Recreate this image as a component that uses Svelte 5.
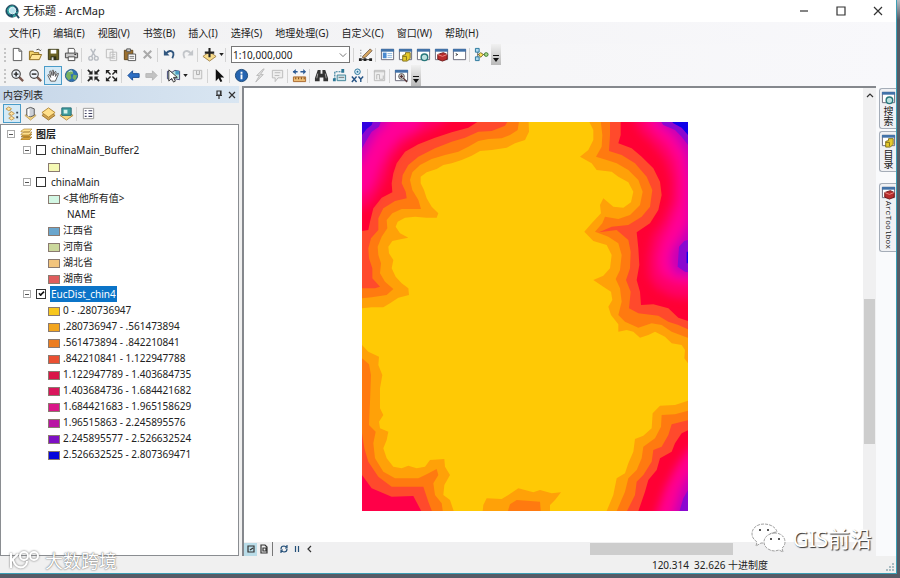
<script>
    const menus = ['文件(F)', '编辑(E)', '视图(V)', '书签(B)', '插入(I)', '选择(S)', '地理处理(G)', '自定义(C)', '窗口(W)', '帮助(H)'];

    // 16x16 icon bodies
    const win = '<path d="M1.500 2.500h13v11h-13z" fill="#fff" stroke="#667"/><path d="M1 2h14v3H1z" fill="#4272a8"/>';
    const glass = '<path d="M9.500 9.500l4.500 4.500" stroke="#7a5a50" stroke-width="2.500"/><circle cx="6.500" cy="6.500" r="4.500" fill="#eef4fb" stroke="#444" stroke-width="1.200"/>';
    const icons = {
        new: '<path d="M3.500 1.500h6l3 3v10h-9z" fill="#fff" stroke="#555"/><path d="M9.500 1.500v3h3" fill="none" stroke="#555"/>',
        open: '<path d="M1.500 13.500v-9h4l1 1.500h5v3" fill="#f3d36b" stroke="#8c6a1c"/><path d="M1.500 13.500l2.500-5.500h10.500l-2.500 5.500z" fill="#ffe597" stroke="#8c6a1c"/><path d="M9 3q3-2 4 1l1-1" fill="none" stroke="#444"/>',
        save: '<path d="M2.500 2.500h11v11h-11z" fill="#6c6326" stroke="#393818"/><path d="M5 3h6v4H5z" fill="#fff"/><path d="M5 10h6v4H5z" fill="#2f3018"/><path d="M6 11h2v3H6z" fill="#ddd"/>',
        print: '<path d="M4.500 6.500v-5h6l1 2v3" fill="#fff" stroke="#555"/><path d="M1.500 6.500h13v5h-13z" fill="#c8c8c8" stroke="#444"/><path d="M4.500 10.500h7v4h-7z" fill="#fff" stroke="#444"/><path d="M11 8h2" stroke="#333"/>',
        cut: '<path d="M5 2l5 8M10 2L6 10" stroke="#b8bcc2" stroke-width="1.500"/><circle cx="5" cy="12" r="2" fill="none" stroke="#b8bcc2" stroke-width="1.500"/><circle cx="11" cy="12" r="2" fill="none" stroke="#b8bcc2" stroke-width="1.500"/>',
        copy: '<path d="M2.500 2.500h7v9h-7zM6.500 5.500h7v9h-7z" fill="#f3f3f3" stroke="#bbb"/><path d="M8 8h4M8 10h4M8 12h4" stroke="#c4c4c4"/>',
        paste: '<path d="M2.500 3.500h9v10h-9z" fill="#9b6f2e" stroke="#604417"/><path d="M5 2h4v3H5z" fill="#ccc" stroke="#555"/><path d="M6.500 7.500h8v7h-8z" fill="#fff" stroke="#555"/><path d="M8 10h5M8 12h5" stroke="#777"/>',
        del: '<path d="M4 4l8 8M12 4l-8 8" stroke="#aaa" stroke-width="2.200"/>',
        undo: '<path d="M4 7q5-5 8-1 1 3-1 6" fill="none" stroke="#31577f" stroke-width="2"/><path d="M2 3v6h6z" fill="#31577f"/>',
        redo: '<path d="M12 7Q7 2 4 6q-1 3 1 6" fill="none" stroke="#c3c6ca" stroke-width="2"/><path d="M14 3v6H8z" fill="#c3c6ca"/>',
        add: '<path d="M1 10l7-5 7 5-7 5z" fill="#f8dc8b" stroke="#a08048"/><path d="M8 1v10M3 6h10" stroke="#222" stroke-width="2.200"/>',
        editor: '<path d="M3 3v11" stroke="#555" stroke-dasharray="1 2"/><path d="M1 12h3v3H1zM6 12h3v3H6zM12 12h3v3h-3z" fill="#222"/><path d="M4 13.500h9" stroke="#222"/><path d="M5 10l8-8 2 2-7 7-3 1z" fill="#d8a760" stroke="#5d4630" stroke-width=".8"/>',
        table: win + '<path d="M3 6h4v6H3z" fill="#4b8ad0"/><path d="M8 7h5M8 9h5M8 11h5" stroke="#8db5df"/>',
        catalog: win + '<path d="M5 9l3-1V6h5v6l-3 3H5z" fill="#e5ca2c" stroke="#81701c"/><path d="M5 10h4v4" stroke="#81701c" fill="none"/>',
        search: win + '<circle cx="9" cy="11" r="3.500" fill="#bde0df" stroke="#28777b" stroke-width="1.500"/>',
        toolbox: win + '<path d="M4 8l6-2 4 2v5l-5 2-5-2z" fill="#b82c2c" stroke="#701919"/><path d="M4 8l5 2 5-2" fill="none" stroke="#eb8b83"/>',
        python: win + '<path d="M4 7l2 1-2 1" fill="none" stroke="#222"/>',
        model: '<path d="M4 3v10M4 8h8" stroke="#555"/><path d="M1.500 1.500h4v4h-4zM1.500 10.500h4v4h-4z" fill="#acd7ee" stroke="#28759a"/><path d="M7 6l3 2-3 3-2-3z" fill="#ffe45c" stroke="#786b22"/><circle cx="13" cy="8" r="2" fill="#a5d888" stroke="#3d7930"/>',
        zoomin: glass + '<path d="M4 6.500h5M6.500 4v5" stroke="#222" stroke-width="1.500"/>',
        zoomout: glass + '<path d="M4 6.500h5" stroke="#222" stroke-width="1.500"/>',
        pan: '<path d="M5 14l-3-6q0-2 2 0l1 2-1-6q0-2 1.500 0l1 4V3q1-2 1.500 0v5l1.500-4q1-1 1.200.500L10 9l2-3q2-1 1 1l-3 7z" fill="#fff" stroke="#555"/>',
        globe: '<circle cx="8" cy="8" r="6.500" fill="#2f70b5" stroke="#285b86"/><path d="M3 5q3-4 6-2l1 3-3 1 1 4-3 2-3-4zM10 7l4 1-2 5-3-2z" fill="#78b25f"/><path d="M5 4q3-2 4 0" stroke="#cce8ff" fill="none"/>',
        fixin: '<path d="M2 2l4 4M14 2l-4 4M2 14l4-4M14 14l-4-4" stroke="#222" stroke-width="1.800"/><path d="M7 2.500V7H2.500zM9 2.500V7h4.500zM7 13.500V9H2.500zM9 13.500V9h4.500z" fill="#222"/>',
        fixout: '<path d="M3 3l4 4M13 3L9 7M3 13l4-4M13 13L9 9" stroke="#222" stroke-width="1.500"/><path d="M2 6.500V2h4.500zM14 6.500V2H9.500zM2 9.500V14h4.500zM14 9.500V14H9.500z" fill="#222"/>',
        back: '<path d="M2 8l5-5v3h7v4H7v3z" fill="#2d6fc5" stroke="#174b91"/>',
        forward: '<path d="M14 8L9 3v3H2v4h7v3z" fill="#c3c3c3" stroke="#b5b5b5"/>',
        select: '<path d="M1.500 3.500l5 1 3-2 5 1v9l-5-1-4 1-4-1z" fill="#b9e3df" stroke="#447"/><path d="M3 2v12l3-3 2 4 2-1-2-4h4z" fill="#fff" stroke="#333"/><path d="M10 3h4v4h-4z" fill="#4a9ec4"/>',
        clear: '<path d="M3.500 2.500h9v9h-9z" fill="#eee" stroke="#bbb"/><path d="M7 3v4h3V3" fill="none" stroke="#aaa"/>',
        pointer: '<path d="M4 1v13l3-3 2 4 2-1-2-4h4z" fill="#111"/>',
        info: '<circle cx="8" cy="8" r="6.500" fill="#2564b0" stroke="#174678"/><path d="M8 7v5M8 4v2" stroke="#fff" stroke-width="2"/>',
        bolt: '<path d="M12 1L5 8h3l-4 7 8-8H9l4-6z" fill="#ddd" stroke="#bbb"/>',
        popup: '<path d="M2.500 2.500h11v8h-5l-3 4v-4h-3z" fill="#eee" stroke="#bbb"/><path d="M5 5h6M5 8h5" stroke="#bbb"/>',
        measure: '<path d="M1 4h14" stroke="#2c5b95" stroke-dasharray="5 3" stroke-width="1.500"/><path d="M4 1L1 4l3 3zM12 1l3 3-3 3z" fill="#2c5b95"/><path d="M1.500 9.500h13v5h-13z" fill="#edbd76" stroke="#a9662c"/><path d="M4 10v2M7 10v2M10 10v2M13 10v2" stroke="#744315"/>',
        find: '<path d="M4 2h3v4h2V2h3l3 9v3h-5v-4H6v4H1v-3z" fill="#333"/><path d="M4 6l-1 5M12 6l1 5" stroke="#aaa"/>',
        route: '<path d="M3 12V4h8" fill="none" stroke="#2c7896" stroke-dasharray="2 1" stroke-width="1.200"/><path d="M1 11h3v3H1zM10 1h3v4h-3z" fill="#2c7896"/><path d="M5.500 7.500h9v6h-9z" fill="#cfe6ec" stroke="#3d8295"/><path d="M7 10h6" stroke="#777"/>',
        xy: '<circle cx="8" cy="4" r="3" fill="#d8edf9" stroke="#287297"/><circle cx="8" cy="4" r="1" fill="#287297"/><path d="M2 9l5 6M7 9l-5 6M9 9l2.500 3L14 9M11.500 12v3" fill="none" stroke="#265485" stroke-width="1.500"/>',
        time: '<path d="M2.500 2.500h11v11h-11z" fill="#eee" stroke="#bbb"/><path d="M2 4h12M5 12V7h3v5h4V8" fill="none" stroke="#bbb"/>',
        viewer: win + '<circle cx="8" cy="9" r="3" fill="#fff" stroke="#444"/><path d="M6 9h4M8 7v4M10 11l4 4" stroke="#583535" stroke-width="1.500"/>',
        order: '<path d="M3 3l4 3-3 3 4 3" fill="none" stroke="#b49b65"/><path d="M1 3l3-2 3 2-3 2zM4 8l3-2 3 2-3 2zM4 13l3-2 3 2-3 2z" fill="#ffe4a0" stroke="#c29852"/><path d="M13 6v2M13 11v2" stroke="#345" stroke-width="2"/>',
        source: '<path d="M2 10l6-3 6 3-6 5z" fill="#f4d37d" stroke="#c2a263"/><path d="M4 3q4-3 8 0v7q-4 3-8 0z" fill="#ccd0d6" stroke="#555"/><path d="M6 3v8" stroke="#fff" stroke-width="2"/>',
        visible: '<path d="M1 10l7-5 7 5-7 5z" fill="#d1a451" stroke="#9b7630"/><path d="M1 7l7-5 7 5-7 5z" fill="#ffe08a" stroke="#b18534"/>',
        selection: '<path d="M1 10l7-4 7 4-7 5z" fill="#f8d780" stroke="#b38b42"/><path d="M3 2h10v8H3z" fill="#41a0a0" stroke="#256b75"/><path d="M5 4h4v4H5z" fill="#d6f2ec"/>',
        options: '<path d="M2.500 2.500h11v11h-11z" fill="#fff" stroke="#999"/><path d="M4 5h2M4 8h2M4 11h2M8 5h4M8 8h4M8 11h4" stroke="#446" stroke-width="1.200"/>'
    };

    // '|' is a separator, 'v' a drop-down arrow
    const standard = ['new', 'open', 'save', 'print', '|', 'cut', 'copy', 'paste', 'del', '|', 'undo', 'redo', '|', 'add', 'v', '|'];
    const windows = ['|', 'editor', '|', 'table', 'catalog', 'search', 'toolbox', 'python', '|', 'model'];
    const tools = ['zoomin', 'zoomout', 'pan', 'globe', '|', 'fixin', 'fixout', '|', 'back', 'forward', '|', 'select', 'v', 'clear', '|', 'pointer', '|', 'info', 'bolt', 'popup', '|', 'measure', '|', 'find', 'route', 'xy', '|', 'time', '|', 'viewer'];
    const contents = ['order', 'source', 'visible', 'selection', '|', 'options'];

    let layers = $state([
        { name: 'chinaMain_Buffer2', checked: false, classes: [{ color: '#f5f9b4', label: '' }] },
        {
            name: 'chinaMain',
            checked: false,
            classes: [
                { color: '#d3f7e4', label: '<其他所有值>' },
                { label: 'NAME' },
                { color: '#6aa6cd', label: '江西省' },
                { color: '#cbd89c', label: '河南省' },
                { color: '#f2c47d', label: '湖北省' },
                { color: '#df5d5d', label: '湖南省' }
            ]
        },
        {
            name: 'EucDist_chin4',
            checked: true,
            selected: true,
            classes: [
                { color: '#f7c71e', label: '0 - .280736947' },
                { color: '#f2a51e', label: '.280736947 - .561473894' },
                { color: '#ec7d20', label: '.561473894 - .842210841' },
                { color: '#ea5032', label: '.842210841 - 1.122947788' },
                { color: '#d91648', label: '1.122947789 - 1.403684735' },
                { color: '#d9165c', label: '1.403684736 - 1.684421682' },
                { color: '#d91688', label: '1.684421683 - 1.965158629' },
                { color: '#b916a4', label: '1.96515863 - 2.245895576' },
                { color: '#7e10c4', label: '2.245895577 - 2.526632524' },
                { color: '#0505dc', label: '2.526632525 - 2.807369471' }
            ]
        }
    ]);

    const docks = [
        { icon: 'search', label: '搜索' },
        { icon: 'catalog', label: '目录' },
        { icon: 'toolbox', label: 'ArcToolbox', apart: true }
    ];
</script>

{#snippet icon(name)}
    <svg class="icon" viewBox="0 0 16 16" fill="none" aria-hidden="true">{@html icons[name]}</svg>
{/snippet}

{#snippet bar(items)}
    {#each items as item}
        {#if item == '|'}
            <span class="sep"></span>
        {:else if item == 'v'}
            <button class="drop" aria-label="more"><svg viewBox="0 0 6 4"><path d="M0 0h6L3 4z" fill="#222" /></svg></button>
        {:else}
            <button class="tool" class:active={item == 'pan' || item == 'order'} aria-label={item}>{@render icon(item)}</button>
        {/if}
    {/each}
{/snippet}

{#snippet overflow()}
    <button class="overflow" aria-label="toolbar options"><svg viewBox="0 0 6 7"><path d="M0 0h6v1H0zM0 3h6L3 7z" fill="#111" /></svg></button>
{/snippet}

<div class="desktop">
    <div class="window">
        <header class="title">
            <svg class="logo" viewBox="0 0 16 16" fill="none">
                <circle cx="7.500" cy="7.500" r="6.500" fill="#1b526f" stroke="#153b50" />
                <path d="M2 6q4-6 8-4L8 6 5 8l1 4-3-2zM10 9l4-1-2 5-4 1z" fill="#37a5a0" />
                <circle cx="8" cy="7" r="3.500" fill="#b9e3ee" stroke="#e8f5fa" />
                <path d="M11 10l4 5" stroke="#224d66" stroke-width="2" />
            </svg>
            <h1>无标题 - ArcMap</h1>
            <div class="caption">
                <button aria-label="minimize"><svg viewBox="0 0 10 10"><path d="M1 5h8" /></svg></button>
                <button aria-label="maximize"><svg viewBox="0 0 10 10"><path d="M1 1h8v8H1z" /></svg></button>
                <button aria-label="close"><svg viewBox="0 0 10 10"><path d="M1 1l8 8M9 1L1 9" /></svg></button>
            </div>
        </header>

        <nav class="menus">
            {#each menus as menu}
                <button>{menu}</button>
            {/each}
        </nav>

        <div class="toolbar">
            <span class="grip"></span>
            {@render bar(standard)}
            <div class="scale">
                <select aria-label="map scale">
                    <option>1:10,000,000</option>
                </select>
                <svg viewBox="0 0 10 6"><path d="M1 1l4 4 4-4" /></svg>
            </div>
            {@render bar(windows)}
            {@render overflow()}
        </div>
        <div class="toolbar">
            <span class="grip"></span>
            {@render bar(tools)}
            {@render overflow()}
        </div>

        <main>
            <aside class="toc">
                <div class="toc-title">
                    <h2>内容列表</h2>
                    <button aria-label="pin"><svg viewBox="0 0 10 10"><path d="M3 1h4v4H3zM2 5.500h6M5 6v3M6.500 1v4" /></svg></button>
                    <button aria-label="close panel"><svg viewBox="0 0 10 10"><path d="M2 2l6 6M8 2L2 8" /></svg></button>
                </div>
                <div class="toc-tools">{@render bar(contents)}</div>
                <div class="tree">
                    <div class="row root">
                        <span class="expander"></span>
                        <svg class="stack" viewBox="0 0 12 12">
                            <path d="M1 9l3-3h8L9 9z M1 11l3-2h8l-3 3H1z" fill="#d9a43c" stroke="#936b24" stroke-width=".6" />
                            <path d="M1 6l3-2h8L9 7H1zM1 3l3-2h8L9 4H1z" fill="#ffe08c" stroke="#a37b31" stroke-width=".6" />
                        </svg>
                        <strong>图层</strong>
                    </div>
                    {#each layers as layer}
                        <label class="row layer">
                            <span class="expander"></span>
                            <input type="checkbox" bind:checked={layer.checked} />
                            <span class="name" class:selected={layer.selected}>{layer.name}</span>
                        </label>
                        {#each layer.classes as item}
                            <div class="row class" class:heading={!item.color}>
                                {#if item.color}
                                    <span class="swatch" style="background: {item.color}"></span>
                                {/if}
                                {item.label}
                            </div>
                        {/each}
                    {/each}
                </div>
            </aside>

            <section class="view">
                <div class="canvas">
                    <svg class="raster" viewBox="0 0 978 1167">
                        <defs>
                            <filter id="soft" x="-20%" y="-20%" width="140%" height="140%"><feGaussianBlur stdDeviation="15" /></filter>
                        </defs>
                        <path d="M0 0h978v1167H0z" fill="#ffc905" />
                        <!-- north west -->
                        <g transform="translate(-21 -21)">
                            <path fill="#ffa108" d="M0 0L520 0 522 50 510 75 480 85 455 98 410 105 375 108 350 122 320 135 290 145 265 150 245 162 215 172 197 185 197 205 207 225 215 250 230 275 250 295 245 308 215 308 180 305 150 308 128 320 122 335 135 355 160 368 140 372 112 378 100 395 102 415 115 435 110 460 122 485 140 505 160 520 162 540 130 548 105 565 85 577 50 577 0 582z" />
                            <path fill="#ff7a10" d="M0 0L495 0 488 45 465 60 440 70 400 72 370 78 340 95 310 110 270 120 230 132 195 150 172 172 165 195 172 225 190 255 198 282 140 282 112 295 95 315 97 340 80 365 68 395 70 420 78 445 75 475 90 500 115 522 95 540 50 547 0 552z" />
                            <path fill="#ff4a2c" d="M0 0L470 0 450 32 410 48 370 50 330 68 290 80 240 100 190 125 160 150 143 180 140 205 152 230 155 250 120 258 85 280 70 310 70 345 48 370 40 400 42 430 52 460 52 490 75 515 60 520 0 520z" />
                            <path fill="#ff0034" d="M0 0L400 0 340 38 290 52 240 68 190 88 150 110 125 145 115 175 110 205 112 232 80 248 55 280 45 320 40 345 0 352z" />
                            <g filter="url(#soft)">
                                <path fill="#ff0068" d="M-60 -60L320 -60 265 28 195 60 140 95 108 140 88 200 65 240 42 275 -60 300z" />
                                <path fill="#ff0098" d="M-60 -60L240 -60 190 35 135 65 95 110 70 160 48 215 30 235 -60 245z" />
                                <path fill="#c400b8" d="M-60 -60L140 -60 95 25 65 55 40 100 15 150 -60 160z" />
                            </g>
                            <path fill="#8a08d0" d="M0 0L85 0 72 35 50 50 35 75 21 100 0 105z" />
                            <path fill="#3000e0" d="M0 0L60 0 50 30 35 42 21 60 0 65z" />
                        </g>
                        <!-- east -->
                        <g transform="translate(489 -21)">
                            <path fill="#ffa108" d="M510 0L183 0 205 45 205 75 190 105 165 125 200 145 215 165 260 170 280 185 310 202 325 230 318 262 295 278 265 275 235 250 225 270 228 295 200 325 178 350 205 378 245 390 260 420 255 460 235 482 205 495 235 515 258 530 262 555 250 575 258 600 280 628 280 650 305 645 325 650 345 668 370 660 390 650 420 665 440 685 470 690 480 705 478 730 489 745 510 750z" />
                            <path fill="#ff7a10" d="M510 0L225 0 232 60 230 95 213 125 245 135 275 145 310 165 340 195 353 230 345 270 315 300 280 312 240 305 232 325 210 350 250 365 280 385 290 420 285 465 272 492 285 520 290 560 285 580 280 600 300 620 340 638 380 625 410 630 440 650 480 665 510 675z" />
                            <path fill="#ff4a2c" d="M510 0L255 0 255 60 252 108 290 120 330 145 365 185 382 225 375 275 350 305 310 330 260 335 222 352 275 345 310 375 317 410 315 460 303 495 317 530 312 580 340 595 400 602 430 620 460 630 510 652z" />
                            <path fill="#ff0034" d="M510 0L287 0 287 60 280 85 320 100 350 125 385 160 405 200 410 240 400 285 375 325 335 352 340 400 343 450 335 495 345 530 348 570 385 568 430 580 460 608 510 625z" />
                            <g filter="url(#soft)">
                                <path fill="#ff0068" d="M550 -60L290 -60 345 50 385 90 420 135 438 190 438 255 415 315 382 365 370 430 372 485 395 520 440 545 550 560z" />
                                <path fill="#ff0098" d="M550 -60L320 -60 385 45 430 90 458 140 466 200 464 260 440 325 415 375 400 430 408 475 445 498 550 515z" />
                                <path fill="#c400b8" d="M550 -60L370 -60 400 25 445 60 482 115 495 200 492 320 465 370 443 400 435 440 450 478 550 490z" />
                            </g>
                            <path fill="#8a08d0" d="M510 0L395 0 415 30 450 45 470 65 489 90 510 92zM510 370L478 378 462 395 458 455 480 470 510 475z" />
                            <path fill="#1000e8" d="M510 0L425 0 445 25 470 38 489 60 510 65zM510 410L485 410 485 445 510 445z" />
                        </g>
                        <!-- south west -->
                        <g transform="translate(-21 579)">
                            <path fill="#ffa108" d="M0 80L21 90 40 110 72 125 70 150 82 180 75 220 75 280 85 300 72 320 75 340 100 350 95 375 85 400 95 430 115 455 140 460 160 452 185 460 210 455 225 435 268 432 270 455 285 480 268 510 265 540 285 555 300 600 0 600z" />
                            <path fill="#ff7a10" d="M0 120L21 130 42 148 48 180 45 260 42 330 62 350 55 385 60 430 85 470 120 490 190 490 215 478 245 462 250 480 235 505 240 540 260 565 265 600 0 600z" />
                            <path fill="#ff4a2c" d="M0 350L21 355 28 400 40 440 70 485 110 515 205 515 220 560 235 600 0 600z" />
                            <path fill="#ff0048" d="M0 460L21 480 50 520 110 545 175 543 205 600 0 600z" />
                            <path fill="#ffa108" d="M382 600L385 570 395 550 440 552 460 540 490 520 535 532 555 525 590 535 618 532 600 555 585 570 585 600z" />
                            <path fill="#ff7a10" d="M455 600L465 568 485 555 555 560 558 600z" />
                        </g>
                        <!-- south east -->
                        <g transform="translate(489 579)">
                            <path fill="#ffa108" d="M510 250L450 270 405 272 383 295 380 340 355 362 330 372 325 410 310 445 300 475 275 490 265 540 240 600 510 600z" />
                            <path fill="#ff7a10" d="M510 282L450 298 410 300 408 335 390 370 355 395 350 430 335 465 310 490 300 530 270 600 510 600z" />
                            <path fill="#ff4a2c" d="M510 310L440 328 430 360 410 395 385 405 380 440 355 480 335 500 330 540 300 600 510 600z" />
                            <path fill="#ff0034" d="M510 335L470 355 450 385 440 410 405 430 395 465 370 495 360 530 336 600 510 600z" />
                            <g filter="url(#soft)">
                                <path fill="#ff0090" d="M560 340L480 415 450 460 420 520 375 650 560 650z" />
                                <path fill="#c400b8" d="M560 400L485 490 468 520 428 650 560 650z" />
                            </g>
                            <path fill="#8a08d0" d="M510 510L489 525 475 550 460 600 510 600z" />
                        </g>
                    </svg>
                </div>
                <div class="vscroll">
                    <svg viewBox="0 0 10 10"><path d="M2 7l3-3 3 3" /></svg>
                    <span class="vthumb"></span>
                </div>
                <div class="hscroll">
                    <button class="mini active" aria-label="data view"><svg viewBox="0 0 10 10"><path d="M2 2h6v6H2zM4 6l3-2" /></svg></button>
                    <button class="mini" aria-label="layout view"><svg viewBox="0 0 10 10"><path d="M2 1h4l2 2v6H2zM4 4h3v3H4z" /></svg></button>
                    <span class="sep"></span>
                    <button class="mini refresh" aria-label="refresh"><svg viewBox="0 0 10 10"><path d="M2 5q0-3 3-3l3 1M8 1v3H6M8 5q0 3-3 3L2 7M2 9V6h2" /></svg></button>
                    <button class="mini pause" aria-label="pause"><svg viewBox="0 0 10 10"><path d="M3.500 2v6M6.500 2v6" /></svg></button>
                    <button class="mini" aria-label="scroll left"><svg viewBox="0 0 10 10"><path d="M6 2L3 5l3 3" /></svg></button>
                    <div class="track"><span class="hthumb"></span></div>
                </div>
            </section>

            <aside class="docks">
                {#each docks as dock}
                    <button class="dock" class:apart={dock.apart}>{@render icon(dock.icon)}<span>{dock.label}</span></button>
                {/each}
            </aside>
        </main>

        <footer>
            <span>120.314&nbsp; 32.626 十进制度</span>
            <svg class="resize" viewBox="0 0 9 9"><path d="M7 1h2v2H7zM4 4h2v2H4zM7 4h2v2H7zM1 7h2v2H1zM4 7h2v2H4zM7 7h2v2H7z" fill="#a9bcc2" /></svg>
        </footer>
    </div>

    <div class="mark left">
        <svg viewBox="0 0 34 22"><path d="M3 3v15M3 11l7-7M5 10q3 9 10 7 4-2 4-6M12 6a4 4 0 1 0 8 0 4 4 0 1 0-8 0M22 6a4 4 0 1 0 8 0 4 4 0 1 0-8 0" /></svg>
        <span>大数跨境</span>
    </div>
    <div class="mark right">
        <svg viewBox="0 0 36 32">
            <path d="M14 2C7 2 2 6 2 12c0 3 2 6 5 8l-1 4 5-3h5c-1-7 5-11 11-11C26 5 20 2 14 2z" />
            <path d="M25 11c-6 0-11 4-11 9s5 9 11 9l4-1 4 2-1-4c2-1 3-4 3-6 0-5-4-9-10-9z" />
            <path class="eyes" d="M9 8h2M17 8h2M20 17h2M28 17h2" />
        </svg>
        <span>GIS前沿</span>
    </div>
</div>

<style>
    :global(body) {
        margin: 0;
        background: #70757d;
    }

    .desktop {
        position: relative;
        display: flex;
        box-sizing: border-box;
        min-height: 100vh;
        padding: 0 3px 4px 0;
        background: linear-gradient(#b9bdc3, #555b66 20px);
        color: #222;
        font-family: 'Noto Sans', 'Noto Sans CJK SC', sans-serif;
        font-size: 10px;
        line-height: 16px;
    }

    .window {
        display: flex;
        flex: 1;
        flex-direction: column;
        min-width: 0;
        border-right: 1px solid #3b9fb5;
        border-bottom: 1px solid #3b9fb5;
        background: #f0f0f0;
    }

    button {
        display: flex;
        align-items: center;
        justify-content: center;
        padding: 0;
        border: 0;
        background: none;
        color: inherit;
        font: inherit;
    }

    h1,
    h2 {
        margin: 0;
        font-weight: 400;
    }

    .title {
        display: flex;
        align-items: center;
        height: 22px;
        padding-left: 5px;
        background: #fff;
    }

    .logo {
        width: 15px;
        height: 15px;
        margin-right: 3px;
    }

    h1 {
        flex: 1;
        font-size: 11px;
    }

    .caption {
        display: flex;
    }

    .caption button {
        width: 37px;
        height: 20px;
    }

    .caption svg,
    .toc-title svg,
    .mini svg,
    .vscroll svg {
        width: 10px;
        height: 10px;
        fill: none;
        stroke: #333;
        stroke-width: 1.2;
    }

    .menus {
        display: flex;
        gap: 13px;
        height: 22px;
        padding-left: 9px;
        background: linear-gradient(90deg, #f1f1f2, #f8f8fb);
    }

    .toolbar {
        display: flex;
        align-items: center;
        height: 21px;
        background: linear-gradient(90deg, #f3f3f3, #f8f8fb);
    }

    .grip {
        width: 2px;
        height: 14px;
        margin: 0 2px 0 4px;
        border-left: 2px dotted #c4c4c4;
        box-sizing: border-box;
    }

    .tool {
        flex: none;
        box-sizing: border-box;
        width: 18px;
        height: 19px;
    }

    .tool.active {
        border: 1px solid #4a9cc9;
        background: #d5eaf6;
    }

    .icon {
        flex: none;
        width: 15px;
        height: 15px;
    }

    .drop {
        width: 6px;
        height: 18px;
    }

    .drop svg {
        width: 5px;
        height: 3px;
    }

    .sep {
        flex: none;
        width: 1px;
        height: 14px;
        margin: 0 2px 0 1px;
        background: #d4d4d4;
    }

    .overflow {
        align-items: flex-end;
        align-self: stretch;
        width: 10px;
        margin-left: 1px;
        padding-bottom: 3px;
        background: linear-gradient(#f1f1f1, #b9b9b9);
    }

    .overflow svg {
        width: 6px;
        height: 7px;
    }

    .scale {
        position: relative;
        width: 119px;
        margin: 0 2px 0 3px;
    }

    .scale svg {
        position: absolute;
        top: 6px;
        right: 3px;
        width: 8px;
        height: 6px;
        fill: none;
        stroke: #555;
        pointer-events: none;
    }

    select {
        display: block;
        appearance: none;
        box-sizing: border-box;
        width: 100%;
        height: 17px;
        padding: 0 1px;
        border: 1px solid #777;
        border-radius: 0;
        background: #fff;
        color: #222;
        font: inherit;
        line-height: 14px;
    }

    main {
        display: flex;
        flex: 1;
    }

    .toc {
        display: flex;
        flex-direction: column;
        width: 239px;
    }

    .toc-title {
        display: flex;
        align-items: center;
        height: 17px;
        padding: 0 1px 0 3px;
        background: linear-gradient(90deg, #c6d6e8, #d9e6f2);
    }

    h2 {
        flex: 1;
        font-size: 10px;
    }

    .toc-title button {
        width: 13px;
    }

    .toc-tools {
        display: flex;
        align-items: center;
        height: 21px;
        padding-left: 3px;
    }

    .tree {
        flex: 1;
        padding-top: 1px;
        border: 1px solid #8a8d91;
        background: #fff;
    }

    .row {
        display: flex;
        align-items: center;
        height: 16px;
        white-space: nowrap;
    }

    .root {
        padding-left: 6px;
    }

    .layer {
        padding-left: 22px;
    }

    .class {
        padding-left: 47px;
    }

    .heading {
        padding-left: 66px;
    }

    .expander {
        box-sizing: border-box;
        width: 8px;
        height: 8px;
        border: 1px solid #aaa;
        background: linear-gradient(#555, #555) center / 4px 1px no-repeat;
    }

    .stack {
        width: 12px;
        height: 12px;
        margin: 0 4px 0 5px;
    }

    input {
        appearance: none;
        box-sizing: border-box;
        width: 10px;
        height: 10px;
        margin: 0 4px 0 5px;
        border: 1px solid #333;
        background: #fff;
    }

    input:checked::before {
        display: block;
        width: 5px;
        height: 2px;
        margin: 1px 0 0 1px;
        border: solid #111;
        border-width: 0 0 2px 2px;
        box-sizing: content-box;
        content: '';
        transform: rotate(-45deg) scale(0.8);
    }

    .name {
        padding: 0 1px;
        line-height: 16px;
    }

    .selected {
        background: #0b74c8;
        color: #fff;
    }

    .swatch {
        box-sizing: border-box;
        width: 12px;
        height: 9px;
        margin: 2px 3px 0 0;
        border: 1px solid #8a7a70;
    }

    .view {
        display: grid;
        flex: 1;
        grid-template: 1fr 14px / 1fr 13px;
        min-width: 0;
        margin-left: 3px;
        border-top: 2px solid #85888d;
        border-left: 2px solid #85888d;
        background: #fff;
    }

    .canvas {
        padding: 34px 0 0 118px;
    }

    .raster {
        display: block;
        width: 326px;
    }

    .vscroll {
        display: flex;
        flex-direction: column;
        align-items: center;
        padding-top: 2px;
        background: #f0f0f1;
    }

    .vthumb {
        width: 11px;
        height: 32%;
        margin-top: 199px;
        background: #cdcdcd;
    }

    .hscroll {
        display: flex;
        grid-column: 1 / 3;
        align-items: center;
        background: #f0f0f1;
    }

    .mini {
        width: 13px;
        height: 13px;
    }

    .mini.active {
        background: #b9dce8;
    }

    .mini.refresh svg,
    .mini.pause svg {
        stroke: #244f78;
    }

    .hscroll .sep {
        margin: 0 4px 0 2px;
        background: #777;
    }

    .track {
        flex: 1;
        padding-left: 274px;
    }

    .hthumb {
        display: block;
        width: 50%;
        height: 12px;
        background: #cdcdcd;
    }

    .docks {
        width: 20px;
        padding-top: 2px;
        background: #f9fafc;
    }

    .dock {
        flex-direction: column;
        box-sizing: border-box;
        width: 17px;
        margin: 0 0 2px 3px;
        padding: 1px 0 2px;
        border: 1px solid #a5adb8;
        border-right: 0;
        border-radius: 3px 0 0 3px;
        background: #f0f1f4;
    }

    .dock span {
        margin-top: 1px;
        line-height: 12px;
        writing-mode: vertical-rl;
    }

    .apart {
        margin-top: 11px;
        font-family: 'Liberation Mono', monospace;
        font-size: 8px;
    }

    footer {
        display: flex;
        align-items: center;
        justify-content: flex-end;
        height: 17px;
    }

    .resize {
        width: 9px;
        height: 9px;
        margin: 4px 2px 0 117px;
    }

    .mark {
        position: absolute;
        display: flex;
        align-items: center;
        color: #fff;
    }

    .mark svg {
        fill: none;
        stroke: #fff;
    }

    .left {
        bottom: 5px;
        left: 8px;
        gap: 3px;
        font-size: 18px;
        line-height: 24px;
        text-shadow: 0 0 2px #777, 0 0 1px #777;
    }

    .left svg {
        width: 34px;
        height: 22px;
        stroke-width: 2;
        filter: drop-shadow(0 0 1px #777);
    }

    .right {
        right: 28px;
        bottom: 24px;
        gap: 6px;
        font-size: 22px;
        line-height: 30px;
        text-shadow: 1px 1px 1px #333;
    }

    .right svg {
        width: 36px;
        height: 32px;
        fill: #fff;
        stroke: #888;
        stroke-dasharray: 3 1;
        stroke-width: 0.8;
    }

    .right .eyes {
        stroke: #555;
        stroke-width: 2;
    }
</style>
